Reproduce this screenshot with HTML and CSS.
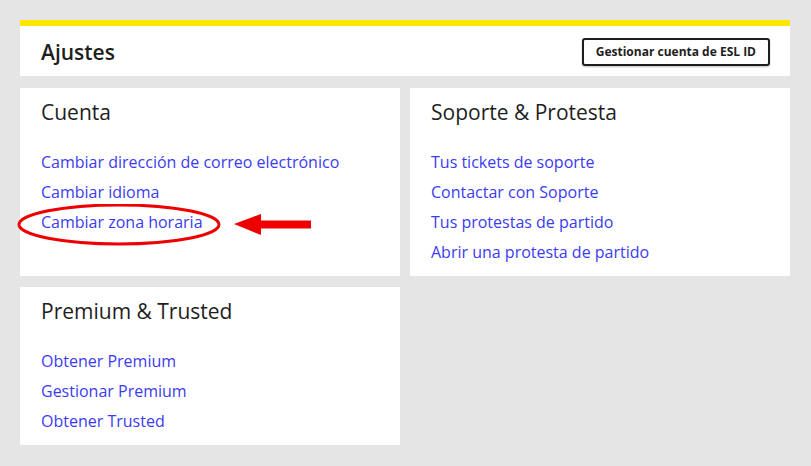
FILE: index.html
```html
<!DOCTYPE html>
<html lang="es">
<head>
  <meta charset="UTF-8">
  <title>Ajustes</title>
  <link rel="stylesheet" href="styles.css">
</head>
<body>
  <div class="page">
    <div class="header">
      <h1>Ajustes</h1>
      <a href="#" class="btn">Gestionar cuenta de ESL ID</a>
    </div>

    <div class="grid">
      <div class="card">
        <h2>Cuenta</h2>
        <a href="#">Cambiar dirección de correo electrónico</a>
        <a href="#">Cambiar idioma</a>
        <a href="#">Cambiar zona horaria</a>

        <!-- annotation drawn over the screenshot -->
        <svg class="mark" width="320" height="50" viewBox="0 0 320 50">
          <ellipse cx="102" cy="20.5" rx="100" ry="19.5" fill="none" stroke="#ee0000" stroke-width="3"/>
          <polygon points="217,20 244,10 244,16.5 294,16.5 294,24.5 244,24.5 244,31" fill="#ee0000"/>
        </svg>
      </div>

      <div class="card">
        <h2>Soporte &amp; Protesta</h2>
        <a href="#">Tus tickets de soporte</a>
        <a href="#">Contactar con Soporte</a>
        <a href="#">Tus protestas de partido</a>
        <a href="#">Abrir una protesta de partido</a>
      </div>

      <div class="card">
        <h2>Premium &amp; Trusted</h2>
        <a href="#">Obtener Premium</a>
        <a href="#">Gestionar Premium</a>
        <a href="#">Obtener Trusted</a>
      </div>
    </div>
  </div>
</body>
</html>
```

FILE: styles.css
```css
* { box-sizing: border-box; }
body {
  margin: 0;
  font-family: 'Open Sans', sans-serif;
  background-color: #e5e5e5;
  color: #1e1e1e;
}
.page {
  padding: 20px 21px 20px 20px;
}
.header {
  display: flex;
  align-items: center;
  justify-content: space-between;
  height: 56px;
  background: white;
  border-top: 6px solid #ffe600;
  padding: 1px 20px 0 21px;
  margin-bottom: 12px;
}
.header h1 {
  margin: 0;
  font-size: 21px;
  font-weight: 600;
}
.btn {
  display: block;
  height: 28px;
  line-height: 24px;
  padding: 0 12px;
  border: 2px solid #1e1e1e;
  border-radius: 3px;
  font-size: 12px;
  font-weight: 700;
  color: #1e1e1e;
  text-decoration: none;
  box-shadow: 0 1px 2px rgba(0,0,0,0.25);
}
.grid {
  display: grid;
  grid-template-columns: 1fr 1fr;
  column-gap: 10px;
  row-gap: 11px;
}
.card {
  position: relative;
  background: white;
  padding: 10px 21px 9px;
}
.card h2 {
  margin: 0 0 21px;
  font-size: 21px;
  font-weight: 400;
  line-height: 28px;
}
.card a {
  display: block;
  font-size: 16px;
  line-height: 30px;
  color: #3b3bf2;
  text-decoration: none;
}
.mark {
  position: absolute;
  left: -3px;
  top: 116px;
}
```
